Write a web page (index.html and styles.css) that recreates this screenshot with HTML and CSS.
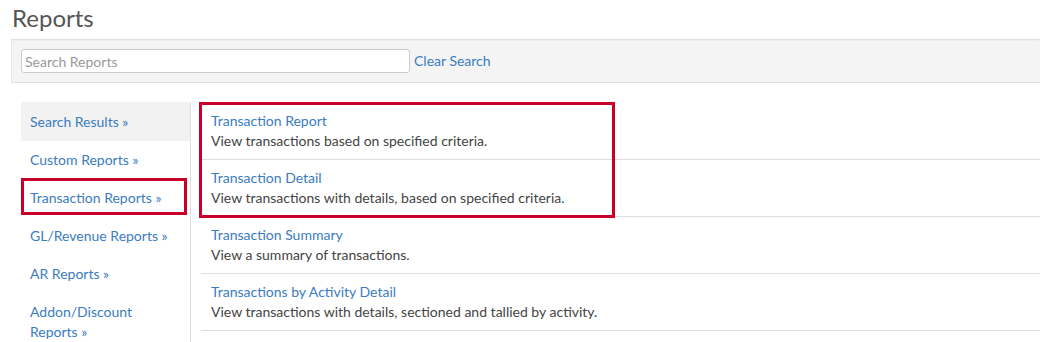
FILE: index.html
```html
<!DOCTYPE html>
<html lang="en">
<head>
<meta charset="utf-8">
<title>Reports</title>
<link rel="stylesheet" href="styles.css">
</head>
<body>
<div class="page">
  <h1 class="title">Reports</h1>
  <div class="search-panel">
    <input class="search-input" type="text" placeholder="Search Reports">
    <a class="link clear" href="#">Clear Search</a>
  </div>
  <div class="main">
    <nav class="sidebar">
      <a class="side-item active" href="#">Search Results »</a>
      <a class="side-item" href="#">Custom Reports »</a>
      <a class="side-item" href="#">Transaction Reports »</a>
      <a class="side-item" href="#">GL/Revenue Reports »</a>
      <a class="side-item" href="#">AR Reports »</a>
      <a class="side-item" href="#">Addon/Discount Reports »</a>
      <div class="highlight hl-side"></div>
    </nav>
    <div class="results">
      <div class="row">
        <a class="link row-title" href="#">Transaction Report</a>
        <div class="row-desc">View transactions based on specified criteria.</div>
      </div>
      <div class="row">
        <a class="link row-title" href="#">Transaction Detail</a>
        <div class="row-desc">View transactions with details, based on specified criteria.</div>
      </div>
      <div class="row">
        <a class="link row-title" href="#">Transaction Summary</a>
        <div class="row-desc">View a summary of transactions.</div>
      </div>
      <div class="row">
        <a class="link row-title" href="#">Transactions by Activity Detail</a>
        <div class="row-desc">View transactions with details, sectioned and tallied by activity.</div>
      </div>
      <div class="highlight hl-rows"></div>
    </div>
  </div>
</div>
</body>
</html>
```

FILE: styles.css
```css
html, body {
  margin: 0;
  padding: 0;
  background: #ffffff;
  overflow: hidden;
}

body {
  font-family: Lato, "Liberation Sans", sans-serif;
  font-size: 14px;
  line-height: 20px;
  color: #444444;
}

.page {
  padding-left: 11px;
}

.title {
  margin: 0 0 3px 1px;
  font-size: 24px;
  font-weight: 400;
  line-height: 36px;
  color: #555555;
}

.link {
  color: #3a7cc0;
  text-decoration: none;
}

.search-panel {
  display: flex;
  align-items: center;
  height: 42px;
  padding-left: 9px;
  background: #f4f4f4;
  border-top: 1px solid #e0e0e0;
  border-bottom: 1px solid #e0e0e0;
  border-left: 1px solid #e6e6e6;
  box-shadow: inset 0 1px 1px rgba(0, 0, 0, 0.03);
}

.search-input {
  box-sizing: border-box;
  width: 389px;
  height: 24px;
  margin: 0;
  padding: 0 3px;
  border: 1px solid #cccccc;
  border-radius: 3px;
  background: #ffffff;
  font-family: Lato, "Liberation Sans", sans-serif;
  font-size: 14px;
  color: #444444;
  outline: none;
}

.search-input::placeholder {
  color: #9a9a9a;
}

.clear {
  margin-left: 4px;
}

.main {
  display: flex;
  margin-top: 19px;
  padding-left: 10px;
}

.sidebar {
  position: relative;
  display: flex;
  flex-direction: column;
  flex: 0 0 169px;
  width: 169px;
  border-right: 1px solid #dddddd;
}

.side-item {
  display: block;
  padding: 9px 9px;
  color: #3a7cc0;
  text-decoration: none;
}

.side-item.active {
  background: #f2f2f2;
  padding-top: 10px;
  padding-bottom: 9px;
}

.results {
  position: relative;
  flex: 1;
  margin-left: 10px;
  margin-top: 1px;
}

.row {
  padding: 8px 10px 8px;
  border-bottom: 1px solid #dddddd;
}

.row-title {
  display: block;
}

.row-desc {
  color: #444444;
}

.highlight {
  position: absolute;
  box-sizing: border-box;
  border: 3px solid #c8002a;
  pointer-events: none;
}

.hl-side {
  left: 0;
  top: 76px;
  width: 166px;
  height: 37px;
}

.hl-rows {
  left: -2px;
  top: -1px;
  width: 416px;
  height: 116px;
}
```
